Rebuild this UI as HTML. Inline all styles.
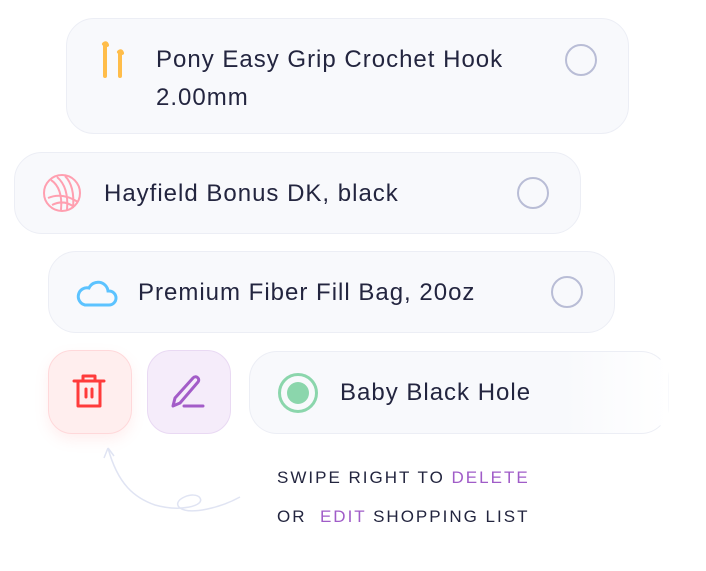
<!DOCTYPE html>
<html><head><style>
body{margin:0;width:706px;height:571px;background:#fff;position:relative;overflow:hidden;font-family:"Liberation Sans",sans-serif;color:#23253f}
.card{position:absolute;background:#f8f9fc;border:1px solid #eceef5;border-radius:28px;box-sizing:border-box}
.t{position:absolute;font-size:24px;line-height:38px;letter-spacing:1px;white-space:nowrap}
.rad{position:absolute;width:32px;height:32px;border:2px solid #b9bdd6;border-radius:50%;box-sizing:border-box}
.btn{position:absolute;width:84px;height:84px;border-radius:24px;box-sizing:border-box}
.hw{position:absolute;font-family:"Liberation Sans",sans-serif;font-size:17px;letter-spacing:2px;color:#23253f;font-weight:normal;white-space:nowrap}
.p{color:#a05cc8}
</style></head><body>
<div class="card" style="left:66px;top:18px;width:563px;height:116px"></div>
<svg style="position:absolute;left:100px;top:40px" width="30" height="40" viewBox="0 0 30 40"><path d="M5 4 V36 M4 4 q2 -2 3 1" stroke="#ffbd4a" stroke-width="4" stroke-linecap="round" fill="none"/><path d="M20 12 V36 M19 12 q2 -2 3 1" stroke="#ffbd4a" stroke-width="4" stroke-linecap="round" fill="none"/></svg>
<div class="t" style="left:156px;top:41px">Pony Easy Grip Crochet Hook<br>2.00mm</div>
<div class="rad" style="left:565px;top:44px"></div>

<div class="card" style="left:14px;top:152px;width:567px;height:82px"></div>
<svg style="position:absolute;left:43px;top:174px" width="40" height="40" viewBox="0 0 40 40" fill="none" stroke="#ff9fb0" stroke-width="2"><circle cx="19" cy="19" r="18"/><path d="M8 6 q12 8 10 30 M14 3 q12 10 10 33 M22 2 q10 10 8 32 M5 24 q14 -6 30 4 M9 31 q12 -6 22 2"/></svg>
<div class="t" style="left:104px;top:175px">Hayfield Bonus DK, black</div>
<div class="rad" style="left:517px;top:177px"></div>

<div class="card" style="left:48px;top:251px;width:567px;height:82px"></div>
<svg style="position:absolute;left:75px;top:276px" width="44" height="32" viewBox="0 0 44 32" fill="none" stroke="#5cc3ff" stroke-width="3"><path d="M10 29 H34 a7 7 0 0 0 0 -14 h-1 a10 10 0 0 0 -19 -3 a8 8 0 0 0 -4 17 z"/></svg>
<div class="t" style="left:138px;top:274px">Premium Fiber Fill Bag, 20oz</div>
<div class="rad" style="left:551px;top:276px"></div>

<div class="btn" style="left:48px;top:350px;background:#ffeeee;border:1px solid #ffd8da;box-shadow:0 6px 14px rgba(255,120,120,0.12)"></div>
<svg style="position:absolute;left:70px;top:372px" width="40" height="40" viewBox="0 0 40 40" fill="none" stroke="#ff3b3b" stroke-width="3" stroke-linecap="round" stroke-linejoin="round"><path d="M4 9 H34 M13 9 V4 H25 V9 M8 9 V34 H30 V9 M16 17 V25 M22 17 V25"/></svg>
<div class="btn" style="left:147px;top:350px;background:#f5ecfa;border:1px solid #e9d9f3"></div>
<svg style="position:absolute;left:169px;top:372px" width="40" height="40" viewBox="0 0 40 40" fill="none" stroke="#a35cc8" stroke-width="3" stroke-linecap="round" stroke-linejoin="round"><path d="M4 34 L6 26 L24 6 a3 3 0 0 1 5 4 L11 31 Z M15 34 H34"/></svg>
<div class="card" style="left:249px;top:351px;width:420px;height:83px;border-radius:28px;border-right-color:transparent;background:linear-gradient(90deg,#f8f9fc 75%,#fff)"></div>
<div style="position:absolute;left:278px;top:373px;width:40px;height:40px;border:3px solid #8bd6ac;border-radius:50%;box-sizing:border-box"></div>
<div style="position:absolute;left:287px;top:382px;width:22px;height:22px;background:#8bd6ac;border-radius:50%"></div>
<div class="t" style="left:340px;top:374px">Baby Black Hole</div>

<svg style="position:absolute;left:100px;top:440px" width="150" height="80" viewBox="0 0 150 80" fill="none" stroke="#e0e4f3" stroke-width="1.5"><path d="M140 57 C120 68 90 75 80 68 C70 60 95 50 100 58 C105 66 80 72 55 65 C35 58 18 45 8 8 M8 8 L4 18 M8 8 L14 16"/></svg>
<div class="hw" style="left:277px;top:468px">SWIPE RIGHT TO <span class="p">DELETE</span></div>
<div class="hw" style="left:277px;top:507px">OR &nbsp;<span class="p">EDIT</span> SHOPPING LIST</div>
</body></html>
